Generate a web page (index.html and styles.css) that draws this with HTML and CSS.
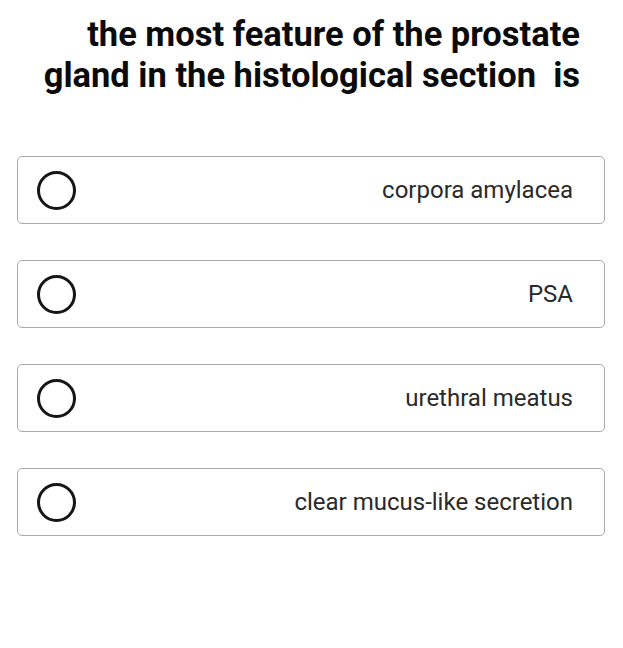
FILE: index.html
```html
<!DOCTYPE html>
<html>
<head>
<meta charset="utf-8">
<link rel="stylesheet" href="styles.css">
</head>
<body>
<div class="page">
  <h1 class="question">the most feature of the prostate<br>gland in the histological section&nbsp; is</h1>
  <div class="options">
    <div class="option"><span class="radio"></span><span class="label">corpora amylacea</span></div>
    <div class="option"><span class="radio"></span><span class="label">PSA</span></div>
    <div class="option"><span class="radio"></span><span class="label">urethral meatus</span></div>
    <div class="option"><span class="radio"></span><span class="label">clear mucus-like secretion</span></div>
  </div>
</div>
</body>
</html>
```
FILE: styles.css
```css
html, body {
  margin: 0;
  padding: 0;
  background: #fff;
}
.page {
  width: 623px;
  height: 648px;
  font-family: Roboto, "Liberation Sans", sans-serif;
}
.question {
  margin: 0;
  padding: 14px 43px 0 0;
  text-align: right;
  font-size: 34.5px;
  line-height: 41px;
  font-weight: 700;
  color: #0b0b0b;
}
.options {
  display: flex;
  flex-direction: column;
  gap: 36px;
  margin: 60px 18px 0 17px;
}
.option {
  display: flex;
  align-items: center;
  justify-content: space-between;
  height: 66px;
  border: 1px solid #a9a9a9;
  border-radius: 5px;
  padding: 0 31px 0 19px;
}
.radio {
  width: 33px;
  height: 33px;
  border: 3px solid #161616;
  border-radius: 50%;
  flex: none;
}
.label {
  font-size: 24px;
  color: #2a2a2a;
}
```
